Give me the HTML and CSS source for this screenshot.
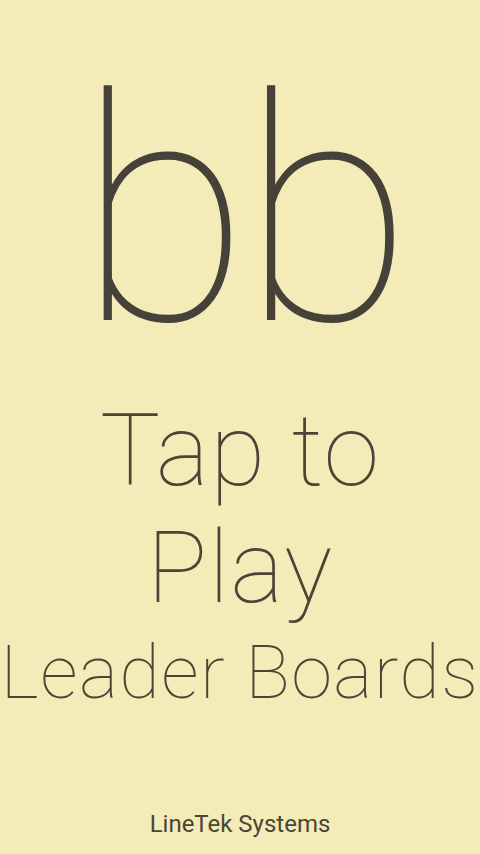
FILE: index.html
```html
<!DOCTYPE html>
<html>
<head>
<meta charset="utf-8">
<link rel="stylesheet" href="styles.css">
</head>
<body>
<main class="screen">
  <div class="logo">bb</div>
  <div class="menu">
    <div class="item tap">Tap to<br>Play</div>
    <div class="item leader">Leader Boards</div>
  </div>
  <footer class="footer">LineTek Systems</footer>
</main>
</body>
</html>
```
FILE: styles.css
```css
html, body {
  margin: 0;
  padding: 0;
  height: 100%;
}
body {
  background: #f3ecb9;
  font-family: Roboto, "Noto Sans", sans-serif;
}
.screen {
  height: 854px;
  display: flex;
  flex-direction: column;
  align-items: center;
  box-sizing: border-box;
  padding-top: 57px;
  padding-bottom: 16px;
}
.logo {
  font-size: 313px;
  font-weight: 100;
  line-height: 313px;
  color: #46423a;
  letter-spacing: -8px;
  padding-left: 2px;
}
.menu {
  margin-top: 22px;
  display: flex;
  flex-direction: column;
  align-items: center;
  text-align: center;
}
.item {
  font-weight: 100;
  color: #4a4536;
}
.tap {
  font-size: 101px;
  line-height: 117px;
  letter-spacing: 1px;
}
.leader {
  font-size: 74px;
  line-height: 90px;
  margin-top: 2px;
  white-space: nowrap;
  letter-spacing: 1.4px;
}
.footer {
  margin-top: auto;
  font-size: 24px;
  line-height: 28px;
  color: #4a4535;
}
```
